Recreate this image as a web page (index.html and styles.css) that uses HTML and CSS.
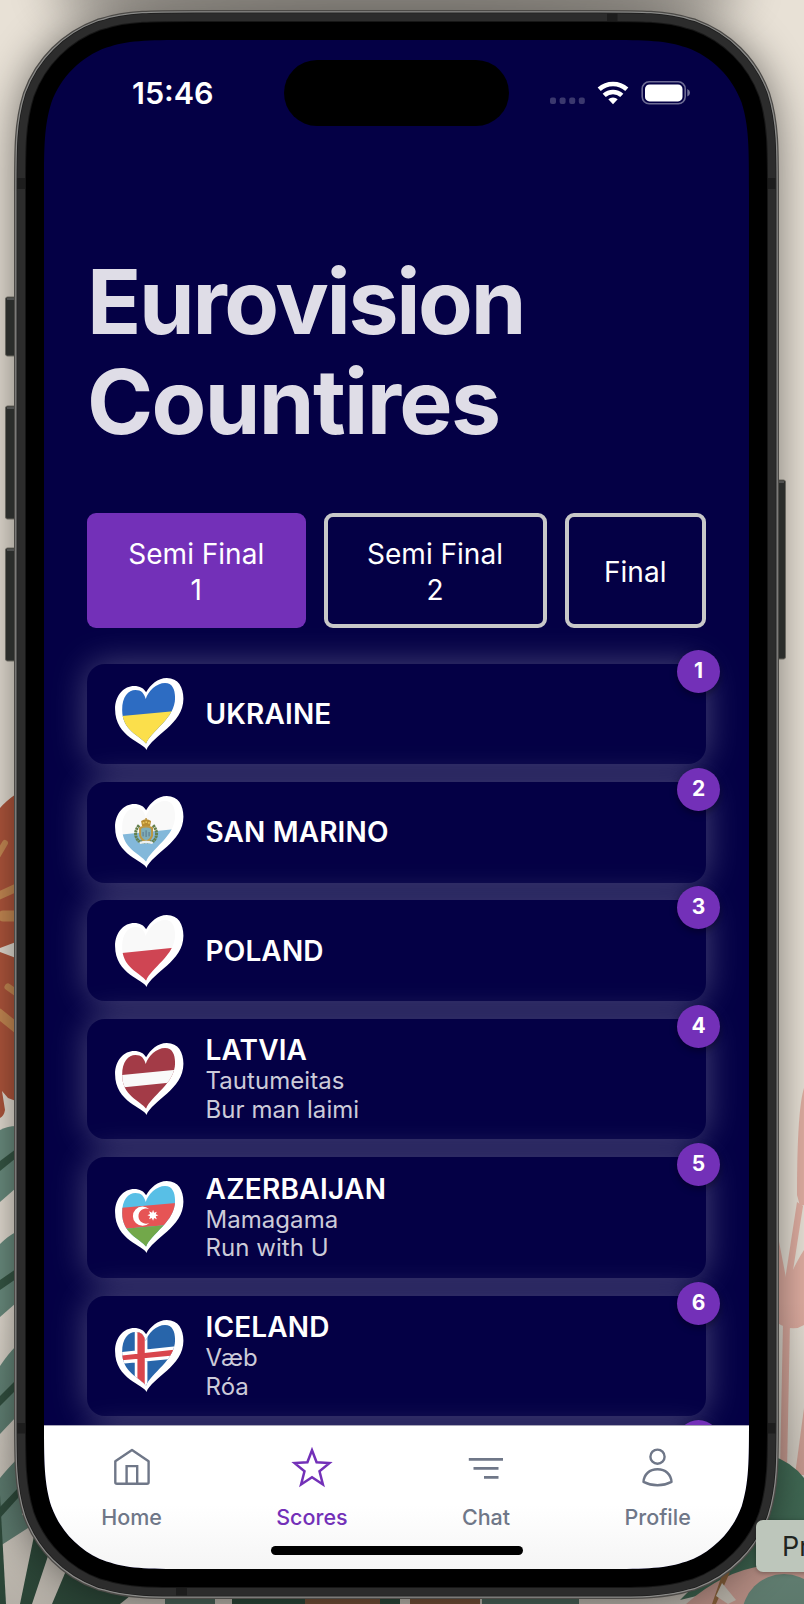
FILE: index.html
```html
<!DOCTYPE html>
<html lang="en">
<head>
<meta charset="utf-8">
<title>Eurovision Countires</title>
<link rel="stylesheet" href="styles.css">
</head>
<body>
<div class="desktop">
  <svg class="wallpaper" width="804" height="1604" viewBox="0 0 804 1604">
    <defs>
      <filter id="soft" x="-20%" y="-20%" width="140%" height="140%"><feGaussianBlur stdDeviation="22"/></filter>
      <path id="device" d="M151.3 0H553.7C597.2 0 619 0 638.7 6.5L642.5 7.4C668.1 16.7 688.3 36.9 697.6 62.5C705 86 705 107.8 705 151.3V1377.7C705 1421.2 705 1443 697.6 1466.5C688.3 1492.1 668.1 1512.3 642.5 1521.6L638.7 1522.5C619 1529 597.2 1529 553.7 1529H151.3C107.8 1529 86 1529 66.3 1522.5L62.5 1521.6C36.9 1512.3 16.7 1492.1 7.4 1466.5C0 1443 0 1421.2 0 1377.7V151.3C0 107.8 0 86 7.4 62.5C16.7 36.9 36.9 16.7 62.5 7.4L66.3 6.5C86 0 107.8 0 151.3 0Z"/>
      <linearGradient id="bottomShade" x1="0" y1="0" x2="0" y2="1"><stop offset="0" stop-color="#000" stop-opacity="0"/><stop offset="1" stop-color="#000" stop-opacity=".22"/></linearGradient>
    </defs>
    <rect width="804" height="1604" fill="#e8e1d6"/>
    <!-- rust leaf -->
    <path fill="#b2573d" d="M0 808Q6 801 16 794V942L0 948V952L16 958V1101L8 1098L2 1091L5 1110Q4 1116 0 1118Z"/>
    <g stroke="#c98b54" stroke-linecap="round" fill="none">
      <path stroke-width="6" d="M-2 855L5 843"/><path stroke-width="8" d="M-2 896L18 887"/>
      <path stroke-width="11" d="M3 916H18"/><path stroke-width="7" d="M8 987L18 994"/><path stroke-width="10" d="M-2 1013L18 1029"/>
    </g>
    <!-- palm fronds -->
    <g fill="#6c8f81">
      <path d="M0 1130Q8 1126 16 1126V1188L0 1202Z"/><path d="M0 1244Q8 1236 16 1232V1303L0 1317Z"/>
      <path d="M0 1366Q8 1354 16 1346V1417L0 1434Z"/><path d="M0 1478Q8 1468 22 1454V1515L42 1520L28 1528L0 1546Z"/>
    </g>
    <g fill="#365745">
      <path d="M0 1161L16 1149V1158L0 1171Z"/><path d="M0 1280L16 1269V1279L0 1290Z"/>
      <path d="M0 1396L16 1380V1390L0 1406Z"/><path d="M0 1507L18 1488V1498L0 1518Z"/>
      <path d="M0 1495L6 1604H0Z"/><path d="M20 1604L34 1536L50 1550L32 1604Z"/>
      <path d="M52 1604L68 1566L130 1596L120 1604Z"/><path d="M232 1598H400V1604H232Z"/>
    </g>
    <path fill="#8d6345" d="M305 1598h75v6h-75zM410 1598h70v6h-70z"/>
    <path fill="#5c7a6d" d="M165 1598h50v6h-50zM482 1598h97v6h-97z"/>
    <!-- pink blossom -->
    <g fill="#e0aea2">
      <path d="M804 1088Q797 1110 797 1195L800 1206L804 1205Z"/>
      <path d="M797 1202L803 1206L790 1290L785 1280Z"/>
      <path d="M776 1226L787 1283Q796 1262 804 1250V1325Q792 1333 776 1322Z"/>
      <path d="M783 1322H790L787 1470H780Z"/>
      <path d="M804 1408L795 1475H804Z"/>
    </g>
    <path fill="#4a7860" d="M770 1455Q792 1462 804 1478V1570L680 1600L740 1540Z"/>
    <path fill="#e0aea2" d="M686 1604Q740 1556 804 1566V1604Z"/>
    <path fill="#a27346" d="M712 1604L722 1575L730 1572L716 1604Z"/>
    <path fill="#e3dccf" d="M722 1583L736 1600L728 1604L716 1596Z"/>
    <circle cx="784" cy="1616" r="42" fill="#779b8b"/>
    <!-- shadow cast by the phone -->
    <g transform="translate(44 40)">
      <use href="#device" filter="url(#soft)" fill="#000" stroke="#000" stroke-width="56" opacity=".52"/>
    </g>
    <ellipse cx="396" cy="-12" rx="350" ry="42" fill="#000" opacity=".38" filter="url(#soft)"/>
    <rect y="1300" width="804" height="304" fill="url(#bottomShade)"/>
    <!-- hardware buttons -->
    <g fill="#2b2d2b" stroke="#68665f" stroke-width="1">
      <rect x="5.5" y="297" width="14" height="59" rx="2"/><rect x="5.5" y="406" width="14" height="113" rx="2"/>
      <rect x="5.5" y="548" width="14" height="113" rx="2"/><rect x="772" y="480" width="13.5" height="179" rx="2"/>
    </g>
    <g fill="none" stroke="#777"><path d="M7 299h8M7 408h8M7 550h8M778 482h6"/></g>
    <g transform="translate(44 40)">
      <use href="#device" stroke="#4c4a47" stroke-width="60"/>
      <use href="#device" stroke="#8b8b89" stroke-width="57.5"/>
      <use href="#device" stroke="#1c1c1c" stroke-width="55"/>
      <use href="#device" stroke="#2c2c2c" stroke-width="53.5"/>
      <g fill="#1d1d1d">
        <rect x="-27" y="138" width="9" height="11"/><rect x="722.500" y="138" width="9" height="11"/>
        <rect x="-27" y="1383" width="9" height="10.500"/><rect x="722.500" y="1383" width="9" height="10.500"/>
        <rect x="563" y="-26.500" width="10.500" height="9"/><rect x="132" y="1546.500" width="11" height="9"/>
      </g>
      <use href="#device" stroke="#171717" stroke-width="38"/>
      <use href="#device" stroke="#000" stroke-width="36"/>
    </g>
  </svg>

  <svg class="defs" width="0" height="0">
    <defs>
      <path id="heart" d="M94 216C88 195 0 178 0 94C0 50 28 24 57 24C74 24 87 31 93 43C106 20 128 0 155 0C190 0 205 28 205 62C205 138 112 172 94 216Z"/>
      <clipPath id="inner"><path d="M93 197C76 174 21 158 21 96C21 56 40 36 61 36C79 36 87 46 92 63C99 40 124 15 150 15C171 15 180 33 180 60C180 122 108 158 93 197Z"/></clipPath>
    </defs>
  </svg>

  <main class="screen">
    <header class="status">
      <span class="time">15:46</span>
      <span class="island"></span>
      <svg class="signals" width="142" height="24" viewBox="0 0 142 24">
        <g fill="#fff" opacity=".22"><rect x="0" y="16.500" width="6" height="6.500" rx="2"/><rect x="9.600" y="16.500" width="6" height="6.500" rx="2"/><rect x="19.200" y="16.500" width="6" height="6.500" rx="2"/><rect x="28.800" y="16.500" width="6" height="6.500" rx="2"/></g>
        <g fill="none" stroke="#fff" stroke-width="4.600"><path d="M49.200 8.300A20.500 20.500 0 0 1 76.800 8.300"/><path d="M54.200 14.400A13 13 0 0 1 71.800 14.400"/></g>
        <path fill="#fff" d="M58.300 18.300A7 7 0 0 1 67.700 18.300L63 23.300Z"/>
        <rect x="92.200" y=".8" width="43" height="22" rx="7" fill="none" stroke="#fff" stroke-opacity=".42" stroke-width="1.600"/>
        <rect x="95" y="3.400" width="37.500" height="17" rx="4.500" fill="#fff"/>
        <path d="M137.300 8Q140 9 140 11.700T137.300 15.500Z" fill="#fff" opacity=".45"/>
      </svg>
    </header>

    <h1 class="title"><span class="t1">Eurovision</span><br><span class="t2">Countires</span></h1>

    <nav class="rounds">
      <button class="round round-active">Semi Final<br>1</button>
      <button class="round">Semi Final<br>2</button>
      <button class="round round-final">Final</button>
    </nav>

    <section class="list">
      <article class="card">
        <svg class="flag" viewBox="0 0 205 216"><use href="#heart" fill="#fff"/><g clip-path="url(#inner)"><rect width="205" height="216" fill="#2d6cc2"/><path fill="#fbdf4b" d="M0 116L205 97V216H0Z"/></g></svg>
        <div class="info"><h2 class="name">UKRAINE</h2></div><span class="badge">1</span>
      </article>
      <article class="card">
        <svg class="flag" viewBox="0 0 205 216"><use href="#heart" fill="#fff"/><g clip-path="url(#inner)"><rect width="205" height="216" fill="#f9f9f9"/><path fill="#83b8da" d="M0 118L205 97V216H0Z"/></g>
          <g fill="none" stroke="#637f4c" stroke-width="9" stroke-dasharray="7 1.500"><path d="M72 88Q52 112 70 135L91 139"/><path d="M114 88Q134 112 116 135L95 139"/></g>
          <path fill="#b88d32" d="M78 75Q93 64 108 75L105 91H81ZM91 66h4v8h-4z"/><path fill="#e7c45b" d="M83 78h5v5h-5zM91 76h5v5h-5zM99 78h5v5h-5z"/>
          <path fill="#80aeb8" stroke="#bd9740" stroke-width="6" d="M75 96Q93 87 111 96V119Q106 133 93 137Q80 133 75 119Z"/>
          <path stroke="#58758c" stroke-width="3" d="M84 121V108M93 123V103M102 121V108"/><path d="M74 141Q93 135 113 141" fill="none" stroke="#eef0f0" stroke-width="7"/></svg>
        <div class="info"><h2 class="name">SAN MARINO</h2></div><span class="badge">2</span>
      </article>
      <article class="card">
        <svg class="flag" viewBox="0 0 205 216"><use href="#heart" fill="#fff"/><g clip-path="url(#inner)"><rect width="205" height="216" fill="#f9f9f9"/><path fill="#cf4553" d="M0 116L205 95V216H0Z"/></g></svg>
        <div class="info"><h2 class="name">POLAND</h2></div><span class="badge">3</span>
      </article>
      <article class="card card-tall">
        <svg class="flag" viewBox="0 0 205 216"><use href="#heart" fill="#fff"/><g clip-path="url(#inner)"><rect width="205" height="216" fill="#a33b47"/><path fill="#f9f9f9" d="M0 98L205 78V115L0 136Z"/></g></svg>
        <div class="info"><h2 class="name">LATVIA</h2><p class="act">Tautumeitas</p><p class="act">Bur man laimi</p></div><span class="badge">4</span>
      </article>
      <article class="card card-tall">
        <svg class="flag" viewBox="0 0 205 216"><use href="#heart" fill="#fff"/><g clip-path="url(#inner)"><rect width="205" height="216" fill="#58bfe6"/><path fill="#e65455" d="M0 82L205 64V128L0 146Z"/><path fill="#72a84a" d="M0 146L205 128V216H0Z"/>
          <path fill="#fff" d="M102 84A29 29 0 1 0 103 126A23 23 0 1 1 102 84Z"/><path fill="#fff" d="M114 86L117 95L125 92L122 100L130 103L122 106L125 115L117 111L114 119L110 111L102 115L105 106L97 103L105 99L102 91L111 95Z"/></g></svg>
        <div class="info"><h2 class="name name-wide">AZERBAIJAN</h2><p class="act">Mamagama</p><p class="act">Run with U</p></div><span class="badge">5</span>
      </article>
      <article class="card card-tall">
        <svg class="flag" viewBox="0 0 205 216"><use href="#heart" fill="#fff"/><g clip-path="url(#inner)"><rect width="205" height="216" fill="#2865aa"/><path fill="#fff" d="M59 0H97V216H59ZM0 98L205 76V113L0 133Z"/><path fill="#d9464d" d="M67 0H89V216H67ZM0 109L205 86V104L0 123Z"/></g></svg>
        <div class="info"><h2 class="name">ICELAND</h2><p class="act">Væb</p><p class="act">Róa</p></div><span class="badge">6</span>
      </article>
      <article class="card card-tall"><span class="badge"></span></article>
    </section>

    <footer class="bar">
      <a class="item"><svg class="icon" width="44" height="44" viewBox="0 0 44 44"><g fill="none" stroke="currentColor" stroke-width="2.400" stroke-linejoin="round"><path d="M5.300 16.300L22 5L38.600 16.300V37.200Q38.600 38.700 37 38.700H7Q5.300 38.700 5.300 37.200Z"/><path stroke-linejoin="miter" d="M16.600 38.700V21.100H27.200V38.700"/></g></svg><span class="label">Home</span></a>
      <a class="item item-active"><svg class="icon" width="44" height="44" viewBox="0 0 44 44"><path fill="none" stroke="currentColor" stroke-width="2.500" d="M22 5.300L26.600 17.300L39.400 18.100L29.500 26.200L32.900 39.500L22 32.200L11.100 39.500L14.500 26.200L4.600 18.100L17.400 17.300Z"/></svg><span class="label">Scores</span></a>
      <a class="item"><svg class="icon" width="44" height="44" viewBox="0 0 44 44"><path fill="none" stroke="currentColor" stroke-width="2.800" d="M4.800 14.300H39M9.500 23.300H34.500M20 32.300H34.500"/></svg><span class="label">Chat</span></a>
      <a class="item"><svg class="icon" width="44" height="44" viewBox="0 0 44 44"><g fill="none" stroke="currentColor" stroke-width="2.400"><circle cx="21.500" cy="11.700" r="7.100"/><path stroke-linejoin="round" d="M7.500 36.900C8 29.300 13.500 24.300 21.500 24.300S35 29.300 35.500 36.900Q29 40.300 21.500 40.300T7.500 36.900Z"/></g></svg><span class="label">Profile</span></a>
      <span class="grabber"></span>
    </footer>
  </main>
  <div class="tooltip">Pr</div>
</div>
</body>
</html>
```

FILE: styles.css
```css
* { box-sizing: border-box; }
body { margin: 0; font-family: Inter, "Liberation Sans", sans-serif; }
h1, h2, p { margin: 0; }
.desktop { position: relative; width: 804px; height: 1604px; padding: 40px 55px 35px 44px; overflow: hidden; }
.wallpaper { position: absolute; inset: 0; }
.defs { position: absolute; }
.screen {
  position: relative; display: flex; flex-direction: column; width: 705px; height: 1529px;
  background: #040045; color: #fff;
  clip-path: path("M151.3 0H553.7C597.2 0 619 0 638.7 6.5L642.5 7.4C668.1 16.7 688.3 36.9 697.6 62.5C705 86 705 107.8 705 151.3V1377.7C705 1421.2 705 1443 697.6 1466.5C688.3 1492.1 668.1 1512.3 642.5 1521.6L638.7 1522.5C619 1529 597.2 1529 553.7 1529H151.3C107.8 1529 86 1529 66.3 1522.5L62.5 1521.6C36.9 1512.3 16.7 1492.1 7.4 1466.5C0 1443 0 1421.2 0 1377.7V151.3C0 107.8 0 86 7.4 62.5C16.7 36.9 36.9 16.7 62.5 7.4L66.3 6.5C86 0 107.8 0 151.3 0Z");
}
.status { display: flex; align-items: center; height: 106px; flex: none; padding-left: 88px; }
.time { width: 152px; padding-bottom: 1px; font-size: 30.500px; font-weight: 600; line-height: 40px; }
.island { width: 224.500px; height: 66px; border-radius: 33px; background: #000; margin-right: 41px; }
.signals { flex: none; margin-bottom: 1px; }

.title { flex: none; margin: 105.500px 0 0 43px; height: 201px; font-size: 89.500px; line-height: 100.500px; font-weight: 700; color: #dfdde7; white-space: nowrap; }
.t1 { letter-spacing: -2.350px; }
.t2 { letter-spacing: -1.650px; }

.rounds { flex: none; display: flex; justify-content: space-between; margin: 60.500px 43px 0; height: 114.500px; }
.round { padding: 3px 0 0; width: 223px; border: 4px solid #c8c8c8; border-radius: 9px; background: none; color: #fff; font-family: inherit; font-size: 28px; font-weight: 430; line-height: 36px; }
.round-active { width: 218.500px; border: 0; background: #7330b8; }
.round-final { width: 141.500px; }

.list { flex: 1; min-height: 0; overflow: hidden; display: flex; flex-direction: column; gap: 17.900px; padding: 36px 43px 0; }
.card { position: relative; flex: none; display: flex; align-items: center; height: 100.600px; padding-left: 28px; border-radius: 18px; background: #040045; box-shadow: 0 0 34px rgba(255, 255, 255, .28); }
.card-tall { height: 120.400px; }
.flag { width: 68.500px; height: 72px; margin-right: 22px; }
.name { font-size: 28px; line-height: 34px; font-weight: 640; letter-spacing: .15px; }
.name-wide { letter-spacing: .3px; }
.act { font-size: 24px; line-height: 28.700px; font-weight: 440; letter-spacing: .05px; color: #cccbd9; }
.badge { position: absolute; top: -14px; right: -14px; width: 43px; height: 43px; border-radius: 50%; background: #7330b8; font-size: 21px; line-height: 42.500px; font-weight: 700; text-align: center; box-shadow: 0 3px 7px rgba(0, 0, 0, .35); }

.bar { position: relative; flex: none; display: flex; justify-content: space-around; height: 144px; padding: 19px 1px 0 0; border-top: 1px solid #a9a7b9; background: linear-gradient(#fff 55%, #f5f5f5); }
.item { display: flex; flex-direction: column; align-items: center; color: #6f7788; }
.item-active { color: #7330b8; }
.icon { display: block; }
.label { margin-top: 12.500px; font-size: 21.500px; line-height: 30px; font-weight: 500; }
.grabber { position: absolute; left: 227px; bottom: 14.500px; width: 251.500px; height: 9px; border-radius: 5px; background: #000; }

.tooltip { position: absolute; left: 756px; top: 1520px; width: 90px; height: 52px; padding: 1px 0 0 26px; border-radius: 7px; background: #bdc6bb; color: #20241f; font-size: 27px; line-height: 52px; box-shadow: 0 1px 5px rgba(0, 0, 0, .35); }
```
